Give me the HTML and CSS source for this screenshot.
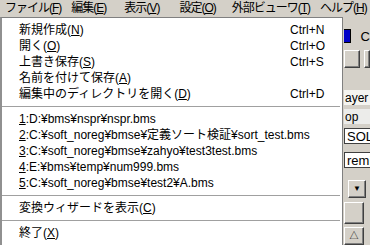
FILE: index.html
```html
<!DOCTYPE html>
<html lang="ja">
<head>
  <meta charset="UTF-8">
  <title>ファイルメニュー</title>
  <link rel="stylesheet" href="styles.css">
</head>
<body>
  <div class="window">
    <div class="menubar">
      <div class="mb-item">ファイル(<u>F</u>)</div>
      <div class="mb-item">編集(<u>E</u>)</div>
      <div class="mb-item">表示(<u>V</u>)</div>
      <div class="mb-item">設定(<u>O</u>)</div>
      <div class="mb-item">外部ビューワ(<u>T</u>)</div>
      <div class="mb-item">ヘルプ(<u>H</u>)</div>
    </div>

    <div class="client">
      <div class="spacer"></div>
      <div class="side">
        <div class="row r1"><span class="blue"></span><span class="txt">C</span></div>
        <div class="row r2"><span class="btn wide"></span><span class="btn"></span></div>
        <div class="row r3"></div>
        <div class="row field">ayer</div>
        <div class="row field dim">op</div>
        <div class="row box">SOL</div>
        <div class="row gap"></div>
        <div class="row box">remi</div>
        <div class="row gap2"></div>
        <div class="row r-drop"><span class="btn drop">&#9660;</span></div>
        <div class="row r-btn"><span class="btn big"></span></div>
        <div class="row r-up"><span class="btn up">&#9651;</span></div>
      </div>
    </div>

    <div class="menu">
      <div class="item"><span>新規作成(<u>N</u>)</span><span class="key">Ctrl+N</span></div>
      <div class="item"><span>開く(<u>O</u>)</span><span class="key">Ctrl+O</span></div>
      <div class="item"><span>上書き保存(<u>S</u>)</span><span class="key">Ctrl+S</span></div>
      <div class="item"><span>名前を付けて保存(<u>A</u>)</span><span class="key"></span></div>
      <div class="item"><span>編集中のディレクトリを開く(<u>D</u>)</span><span class="key">Ctrl+D</span></div>
      <div class="sep"></div>
      <div class="item"><span><u>1</u>:D:¥bms¥nspr¥nspr.bms</span></div>
      <div class="item"><span><u>2</u>:C:¥soft_noreg¥bmse¥定義ソート検証¥sort_test.bms</span></div>
      <div class="item"><span><u>3</u>:C:¥soft_noreg¥bmse¥zahyo¥test3test.bms</span></div>
      <div class="item"><span><u>4</u>:E:¥bms¥temp¥num999.bms</span></div>
      <div class="item"><span><u>5</u>:C:¥soft_noreg¥bmse¥test2¥A.bms</span></div>
      <div class="sep"></div>
      <div class="item"><span>変換ウィザードを表示(<u>C</u>)</span></div>
      <div class="sep"></div>
      <div class="item"><span>終了(<u>X</u>)</span></div>
    </div>
  </div>
</body>
</html>
```

FILE: styles.css
```css
body { margin: 0; font-family: "Liberation Sans", "Noto Sans CJK JP", sans-serif; font-size: 12px; color: #000; }
.window { position: relative; width: 370px; height: 245px; overflow: hidden; background: #d4d0c8; }
u { text-decoration: underline; text-underline-offset: 1px; }

.menubar { display: flex; height: 17px; line-height: 17px; background: #d4d0c8; padding-left: 5px; gap: 10px; letter-spacing: -1px; }
.mb-item { white-space: nowrap; }
.mb-item:nth-child(2) { margin-right: 8px; }
.mb-item:nth-child(3) { margin-right: 10px; }
.mb-item:nth-child(4) { margin-right: 6px; }

.client { display: flex; height: 228px; }
.spacer { flex: 1; }
.side { width: 26px; display: flex; flex-direction: column; }
.row { display: flex; align-items: center; overflow: hidden; white-space: nowrap; }
.r1 { height: 28px; padding-top: 6px; gap: 10px; }
.blue { width: 8px; height: 12px; background: #0000c8; border: 1px solid #000; border-left: none; }
.txt { font-size: 13px; }
.r2 { height: 20px; gap: 4px; }
.btn { display: inline-block; background: #d4d0c8; border: 1px solid; border-color: #fff #404040 #404040 #fff; box-shadow: inset -1px -1px #808080; }
.wide { width: 18px; height: 16px; }
.r2 .btn:last-child { width: 6px; height: 16px; }
.r3 { height: 24px; }
.field { height: 16px; background: #f4f4f0; padding-left: 1px; }
.dim { margin-top: 4px; background: #ececea; }
.box { height: 15px; background: #fff; border: 1px solid #404040; border-right: none; padding-left: 2px; font-size: 13px; margin-top: 4px; }
.gap { height: 4px; }
.gap2 { height: 10px; }
.r-drop { height: 24px; padding-left: 4px; }
.drop { width: 16px; height: 16px; font-size: 8px; line-height: 16px; text-align: center; }
.r-btn { height: 28px; }
.big { width: 18px; height: 20px; }
.r-up { height: 20px; }
.up { width: 18px; height: 16px; font-size: 9px; line-height: 16px; text-align: center; }

.menu { position: absolute; left: 0; top: 17px; width: 340px; height: 224px; background: #fff; border: 1px solid #808080; border-left: 2px solid #909090; padding: 4px 0 2px; }
.item { display: flex; height: 16px; line-height: 16px; padding-left: 17px; white-space: nowrap; }
.item span:first-child { flex: 1; }
.key { width: 52px; }
.sep { height: 9px; display: flex; align-items: center; padding-right: 2px; }
.sep::after { content: ""; flex: 1; border-top: 1px solid #a0a0a0; }
```
